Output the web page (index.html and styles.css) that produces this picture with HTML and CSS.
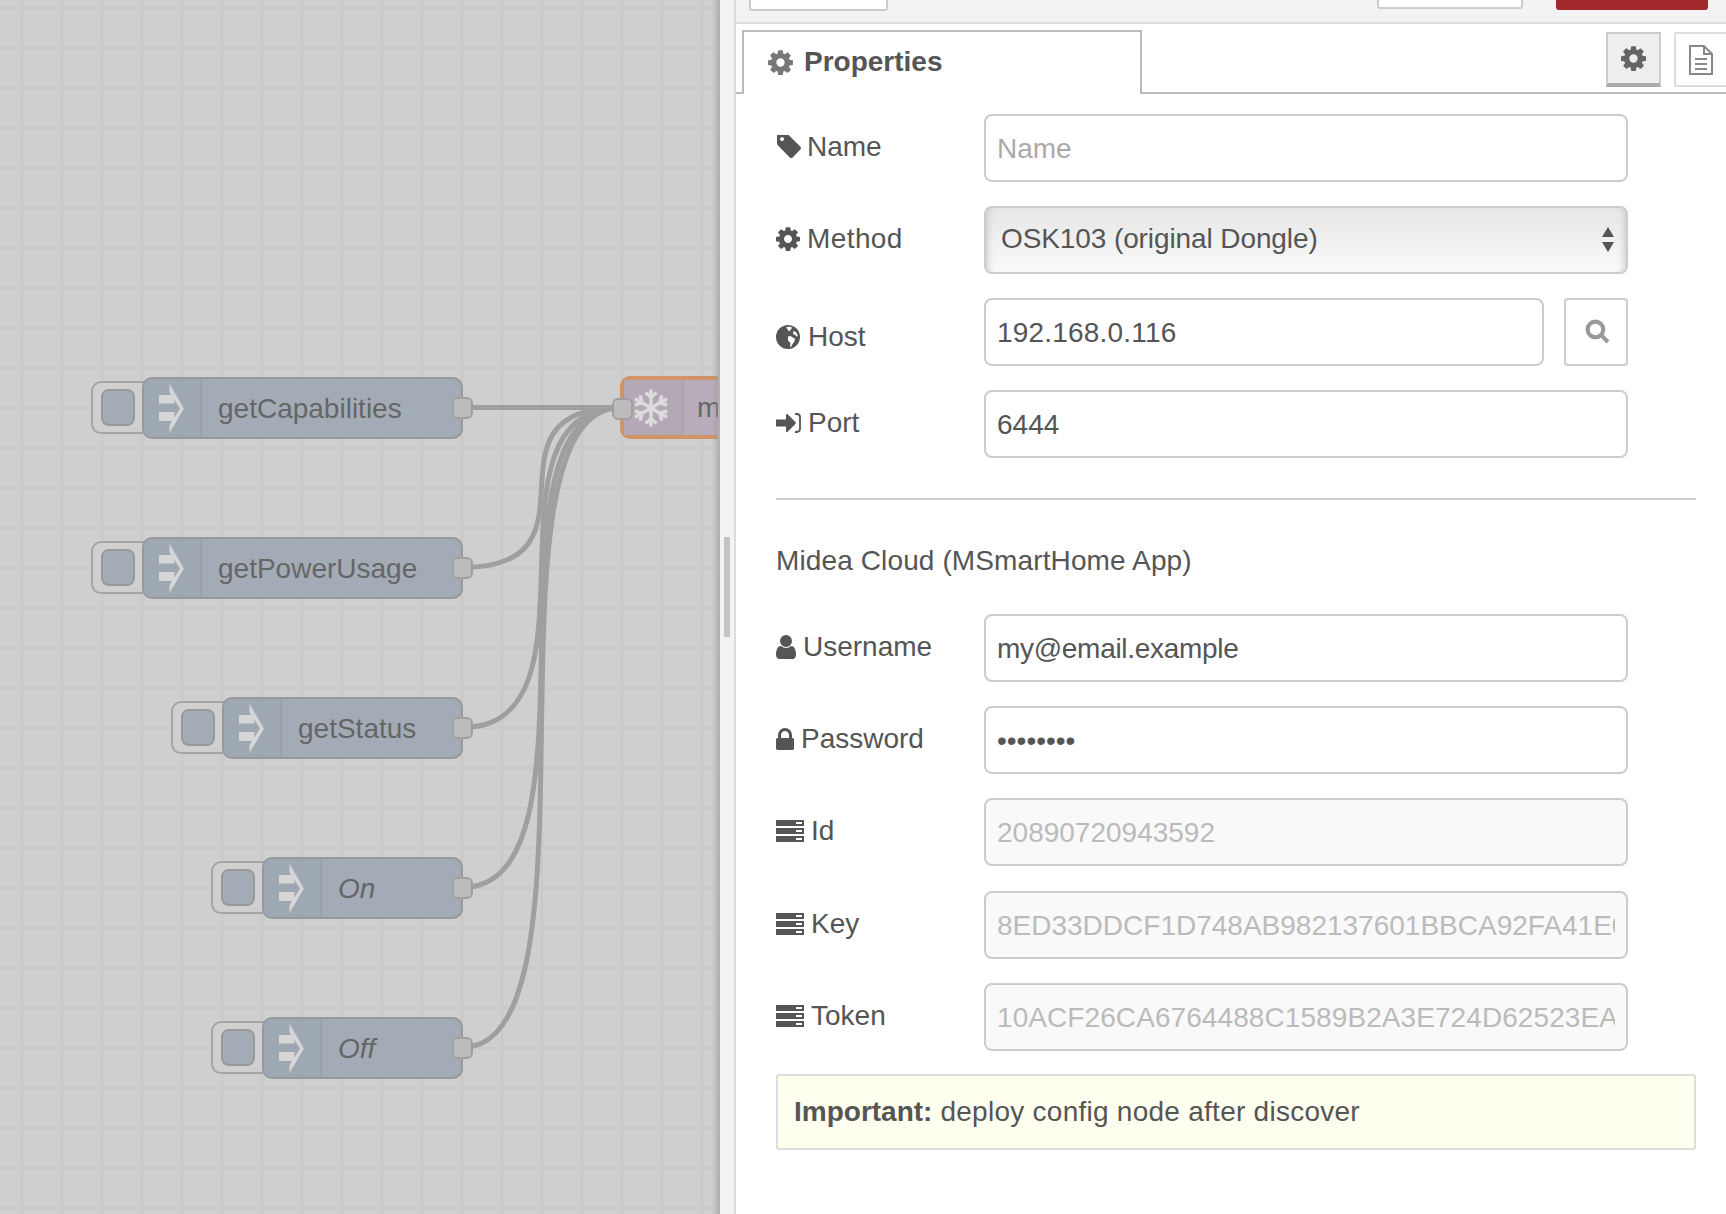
FILE: index.html
```html
<!DOCTYPE html>
<html lang="en">
<head>
	<meta charset="UTF-8">
	<title>Edit midea node</title>
	<link rel="stylesheet" href="styles.css">
</head>
<body>

	<svg class="icon-defs" xmlns="http://www.w3.org/2000/svg">
		<symbol id="i-cog" viewBox="128 128 1536 1536"><path d="M1152 896q0-106-75-181t-181-75-181 75-75 181 75 181 181 75 181-75 75-181zm512-109v222q0 12-8 23t-20 13l-185 28q-19 54-39 91 35 50 107 138 10 12 10 25t-9 23q-27 37-99 108t-94 71q-12 0-26-9l-138-108q-44 23-91 38-16 136-29 186-7 27-36 27h-222q-14 0-24.5-8.5t-11.5-21.5l-28-184q-49-16-90-37l-141 107q-10 9-25 9-14 0-25-11-126-114-165-157-7-10-7-23 0-12 8-23 15-21 51-66.5t54-70.5q-27-50-41-99l-183-27q-13-2-21-12.5t-8-23.5v-222q0-12 8-23t19-13l186-28q14-46 39-92-40-57-107-138-10-12-10-24 0-10 9-23 26-36 98.5-107.5t94.5-71.5q13 0 26 10l138 107q44-23 91-38 16-136 29-186 7-27 36-27h222q14 0 24.5 8.5t11.5 21.5l28 184q49 16 90 37l142-107q9-9 24-9 13 0 25 10 129 119 165 170 7 8 7 22 0 12-8 23-15 21-51 66.5t-54 70.5q26 50 41 98l183 28q13 2 21 12.5t8 23.5z"/></symbol>
		<symbol id="i-tag" viewBox="64 192 1580 1452"><path d="M576 448q0-53-37.5-90.5t-90.5-37.5-90.5 37.5-37.5 90.5 37.5 90.5 90.5 37.5 90.5-37.5 37.5-90.5zm1067 576q0 53-37 90l-491 492q-39 37-91 37-53 0-90-37l-715-716q-38-37-64.5-101t-26.5-117v-416q0-52 38-90t90-38h416q53 0 117 26.5t102 64.5l715 714q37 39 37 91z"/></symbol>
		<symbol id="i-user" viewBox="256 128 1280 1536"><path d="M1536 1399q0 109-62.5 187t-150.5 78h-854q-88 0-150.5-78t-62.5-187q0-85 8.5-160.5t31.5-152 58.5-131 94-89 134.5-34.5q131 128 313 128t313-128q76 0 134.5 34.5t94 89 58.5 131 31.5 152 8.5 160.5zm-256-887q0 159-112.5 271.5t-271.5 112.5-271.5-112.5-112.5-271.5 112.5-271.5 271.5-112.5 271.5 112.5 112.5 271.5z"/></symbol>
		<symbol id="i-lock" viewBox="320 128 1152 1408"><path d="M640 768h512v-192q0-106-75-181t-181-75-181 75-75 181v192zm832 96v576q0 40-28 68t-68 28h-960q-40 0-68-28t-28-68v-576q0-40 28-68t68-28h32v-192q0-184 132-316t316-132 316 132 132 316v192h32q40 0 68 28t28 68z"/></symbol>
		<symbol id="i-signin" viewBox="0 0 25 20"><path d="M0 6.500h10V2c0-.9 1-1.300 1.600-.7l7.800 7.800c.5.500.5 1.300 0 1.800l-7.800 7.800c-.6.600-1.600.2-1.600-.7v-4.500H0z"/><path d="M19 1h1.800c1.800 0 3.200 1.400 3.200 3.200v11.600c0 1.800-1.400 3.200-3.200 3.200H19" fill="none" stroke="currentColor" stroke-width="1.800"/></symbol>
		<symbol id="i-globe" viewBox="0 0 24 24"><circle cx="12" cy="12" r="12"/><path d="M10 2.500l3-1 3.500 1.200-1.500 1.300-1 2-2-.5-.5-1.500zM17.500 6l2.500 1 2 4-1.500.5-1-1.500-2-.5-.5-2zM12 11.500l2.500-.5 3 2 1.500.5-.5 3-2 2.500-1.500 3-1-.5.5-3.500-2.500-2.500z" fill="#fff"/></symbol>
		<symbol id="i-server" viewBox="0 0 28 22"><path d="M0 0h28v6H0zM0 8h28v6H0zM0 16h28v6H0z"/><path d="M20 2h6v2h-6zM20 10h6v2h-6zM20 18h6v2h-6z" fill="#fff"/></symbol>
		<symbol id="i-inject" viewBox="0 0 25 49"><path d="M0 11h15.500v8.500H0zM0 28h15.500v9H0z"/><path fill-rule="evenodd" d="M10.500 0L25 24.500 10.500 49V41L21 24.500 10.500 8z"/></symbol>
	</svg>

	<div class="workspace">
		<svg class="wires" xmlns="http://www.w3.org/2000/svg" width="720" height="1214">
			<path d="M462 407.500H621"/>
			<path d="M462 567.500C612 567.500 471 407.500 621 407.500"/>
			<path d="M462 727.500C612 727.500 471 407.500 621 407.500"/>
			<path d="M462 887.500C612 887.500 471 407.500 621 407.500"/>
			<path d="M462 1047.500C612 1047.500 471 407.500 621 407.500"/>
		</svg>

		<div class="node node-capabilities">
			<div class="inject-btn"><span></span></div>
			<div class="node-icon"><svg class="inject-icon"><use href="#i-inject"/></svg></div>
			<div class="node-label">getCapabilities</div>
			<div class="port port-out"></div>
		</div>
		<div class="node node-power">
			<div class="inject-btn"><span></span></div>
			<div class="node-icon"><svg class="inject-icon"><use href="#i-inject"/></svg></div>
			<div class="node-label">getPowerUsage</div>
			<div class="port port-out"></div>
		</div>
		<div class="node node-status">
			<div class="inject-btn"><span></span></div>
			<div class="node-icon"><svg class="inject-icon"><use href="#i-inject"/></svg></div>
			<div class="node-label">getStatus</div>
			<div class="port port-out"></div>
		</div>
		<div class="node node-on">
			<div class="inject-btn"><span></span></div>
			<div class="node-icon"><svg class="inject-icon"><use href="#i-inject"/></svg></div>
			<div class="node-label italic">On</div>
			<div class="port port-out"></div>
		</div>
		<div class="node node-off">
			<div class="inject-btn"><span></span></div>
			<div class="node-icon"><svg class="inject-icon"><use href="#i-inject"/></svg></div>
			<div class="node-label italic">Off</div>
			<div class="port port-out"></div>
		</div>

		<div class="midea-node">
			<div class="midea-icon">
				<svg class="snowflake" viewBox="-18 -20 36 40" xmlns="http://www.w3.org/2000/svg">
					<g id="arm"><path d="M0 0V-18.500M-5.500 -15.500L0 -10.500L5.500 -15.500"/></g>
					<use href="#arm" transform="rotate(60)"/>
					<use href="#arm" transform="rotate(120)"/>
					<use href="#arm" transform="rotate(180)"/>
					<use href="#arm" transform="rotate(240)"/>
					<use href="#arm" transform="rotate(300)"/>
				</svg>
			</div>
			<div class="midea-label">m</div>
			<div class="port port-in"></div>
		</div>
	</div>

	<div class="tray-grip"><div class="grip-handle"></div></div>

	<div class="tray">
		<div class="tray-toolbar">
			<div class="toolbar-btn btn-left"></div>
			<div class="toolbar-btn btn-cancel"></div>
			<div class="toolbar-btn btn-delete"></div>
		</div>

		<div class="tabs">
			<div class="tab"><svg class="tab-cog"><use href="#i-cog"/></svg>Properties</div>
			<div class="tab-btn tab-btn-active"><svg class="btn-cog"><use href="#i-cog"/></svg></div>
			<div class="tab-btn tab-btn-doc">
				<svg class="doc-icon" viewBox="0 0 24 30" xmlns="http://www.w3.org/2000/svg">
					<path d="M1 1H15L23 9V29H1Z M15 1V9H23 M6 14H18 M6 19H18 M6 24H18"/>
				</svg>
			</div>
		</div>

		<form class="form">
			<div class="row">
				<label class="field-label label-name"><svg class="ico ico-tag"><use href="#i-tag"/></svg>Name</label>
				<input class="field" type="text" placeholder="Name">
			</div>
			<div class="row">
				<label class="field-label label-method"><svg class="ico ico-cog"><use href="#i-cog"/></svg>Method</label>
				<div class="select-wrap">
					<select class="select">
						<option>OSK103 (original Dongle)</option>
					</select>
					<span class="select-arrows"></span>
				</div>
			</div>
			<div class="row">
				<label class="field-label label-host"><svg class="ico ico-globe"><use href="#i-globe"/></svg>Host</label>
				<input class="field field-host" type="text" value="192.168.0.116">
				<button class="search-btn" type="button">
					<svg class="search-icon" viewBox="0 0 24 24" xmlns="http://www.w3.org/2000/svg">
						<circle cx="10" cy="10" r="7.500"/><path d="M15.500 15.500L22 22"/>
					</svg>
				</button>
			</div>
			<div class="row">
				<label class="field-label"><svg class="ico ico-signin"><use href="#i-signin"/></svg>Port</label>
				<input class="field" type="text" value="6444">
			</div>

			<hr class="divider">
			<div class="section-title">Midea Cloud (MSmartHome App)</div>

			<div class="row">
				<label class="field-label"><svg class="ico ico-user"><use href="#i-user"/></svg>Username</label>
				<input class="field field-email" type="text" value="my@email.example">
			</div>
			<div class="row">
				<label class="field-label"><svg class="ico ico-lock"><use href="#i-lock"/></svg>Password</label>
				<input class="field" type="password" value="password">
			</div>
			<div class="row">
				<label class="field-label"><svg class="ico ico-server"><use href="#i-server"/></svg>Id</label>
				<input class="field" type="text" value="20890720943592" disabled>
			</div>
			<div class="row">
				<label class="field-label"><svg class="ico ico-server"><use href="#i-server"/></svg>Key</label>
				<input class="field" type="text" value="8ED33DDCF1D748AB982137601BBCA92FA41E0C7A" disabled>
			</div>
			<div class="row">
				<label class="field-label"><svg class="ico ico-server"><use href="#i-server"/></svg>Token</label>
				<input class="field field-token" type="text" value="10ACF26CA6764488C1589B2A3E724D62523EAA7B" disabled>
			</div>

			<div class="tip"><b>Important:</b><span class="tip-text">deploy config node after discover</span></div>
		</form>
	</div>

</body>
</html>
```

FILE: styles.css
```css
* {
	box-sizing: border-box;
}
html, body {
	margin: 0;
	height: 100%;
}
body {
	display: flex;
	width: 1726px;
	height: 1214px;
	overflow: hidden;
	font-family: "Liberation Sans", Arial, sans-serif;
	font-size: 28px;
	color: #555;
	background: #fff;
}
.icon-defs {
	display: none;
}

/* flow canvas */
.workspace {
	position: relative;
	isolation: isolate;
	width: 720px;
	flex: none;
	overflow: hidden;
	background-color: #cfcfcf;
	background-image:
		linear-gradient(to right, #c8c8c8 2px, transparent 2px),
		linear-gradient(to bottom, #c8c8c8 2px, transparent 2px);
	background-size: 40px 40px;
	background-position: 21px 7px;
}
.workspace::after {
	content: "";
	position: absolute;
	top: 0;
	right: 0;
	bottom: 0;
	width: 8px;
	background: linear-gradient(to right, rgba(150,150,150,0), rgba(150,150,150,.6));
}
.wires {
	position: absolute;
	left: 0;
	top: 0;
}
.wires path {
	fill: none;
	stroke: #9f9f9f;
	stroke-width: 5;
}
.node {
	position: absolute;
	right: 257px;
	height: 62px;
	display: flex;
	align-items: center;
	background: #a3acb6;
	border: 2px solid #999;
	border-radius: 10px;
}
.node-capabilities { top: 377px; left: 142px; }
.node-power { top: 537px; left: 142px; }
.node-status { top: 697px; left: 222px; }
.node-on { top: 857px; left: 262px; }
.node-off { top: 1017px; left: 262px; }

.node-icon {
	width: 58px;
	height: 100%;
	flex: none;
	display: flex;
	align-items: center;
	padding-left: 15px;
	background: #9ea8b2;
	border-right: 2px solid #98a2ac;
	border-radius: 8px 0 0 8px;
}
.inject-icon {
	width: 25px;
	height: 49px;
	fill: #d6d6d6;
}
.node-label {
	margin-left: 16px;
	padding-top: 2px;
	color: #666;
	white-space: nowrap;
}
.italic {
	font-style: italic;
}
.inject-btn {
	position: absolute;
	left: -53px;
	top: 2px;
	width: 61px;
	height: 53px;
	z-index: -1;
	padding: 6px 0 0 8px;
	border: 2px solid #a5a5a5;
	border-radius: 10px;
	background: #cfcfcf;
}
.inject-btn span {
	display: block;
	width: 34px;
	height: 37px;
	background: #a3acb6;
	border: 2px solid #999;
	border-radius: 8px;
}
.port {
	position: absolute;
	width: 21px;
	height: 22px;
	background: #bcbcbc;
	border: 2px solid #a0a0a0;
	border-radius: 6px;
}
.port-out {
	right: -12px;
	top: 18px;
}
.port-in {
	left: -12px;
	top: 18px;
}
.midea-node {
	position: absolute;
	left: 620px;
	top: 376px;
	width: 98px;
	height: 63px;
	display: flex;
	align-items: center;
	background: #b9acba;
	border: 4px solid #cf9566;
	border-right: 0;
	border-radius: 10px 0 0 10px;
}
.midea-icon {
	width: 60px;
	height: 100%;
	flex: none;
	display: flex;
	align-items: center;
	justify-content: center;
	padding-right: 4px;
	background: #b5a8b6;
	border-right: 2px solid #aea1af;
}
.snowflake {
	width: 36px;
	height: 40px;
	fill: none;
	stroke: #dcdcdc;
	stroke-width: 3.500;
}
.midea-label {
	width: 21px;
	margin-left: 13px;
	overflow: hidden;
	color: #666;
	white-space: nowrap;
}

/* strip between canvas and tray */
.tray-grip {
	position: relative;
	width: 16px;
	flex: none;
	background: #f3f3f3;
	border-right: 2px solid #ddd;
}
.grip-handle {
	position: absolute;
	left: 4px;
	top: 537px;
	width: 6px;
	height: 100px;
	background: #c4c4c4;
}

/* edit tray */
.tray {
	flex: 1;
	min-width: 0;
	display: flex;
	flex-direction: column;
}
.tray-toolbar {
	height: 24px;
	flex: none;
	display: flex;
	align-items: flex-start;
	padding: 0 18px 0 13px;
	background: #f3f3f3;
	border-bottom: 2px solid #ddd;
}
.toolbar-btn {
	background: #fff;
	border: 2px solid #ccc;
	border-top: 0;
	border-radius: 0 0 3px 3px;
}
.btn-left {
	width: 139px;
	height: 11px;
}
.btn-cancel {
	width: 146px;
	height: 9px;
	margin-left: auto;
}
.btn-delete {
	width: 152px;
	height: 10px;
	margin-left: 33px;
	background: #a2282c;
	border: 0;
}

.tabs {
	height: 70px;
	flex: none;
	display: flex;
	align-items: flex-start;
	padding-top: 6px;
	border-bottom: 2px solid #bbb;
}
.tab {
	width: 400px;
	height: 64px;
	margin-left: 6px;
	display: flex;
	align-items: center;
	gap: 11px;
	padding: 0 0 2px 24px;
	font-weight: bold;
	background: #fff;
	border: 2px solid #bbb;
	border-bottom: 0;
}
.tab-cog {
	width: 25px;
	height: 25px;
	fill: #777;
}
.tab-btn {
	height: 55px;
	margin-top: 2px;
	display: flex;
	align-items: center;
	justify-content: center;
	border: 2px solid #ddd;
}
.tab-btn-active {
	width: 55px;
	margin-left: auto;
	background: #eee;
	border-color: #ccc;
	border-bottom: 4px solid #aaa;
}
.btn-cog {
	width: 25px;
	height: 25px;
	fill: #666;
}
.tab-btn-doc {
	width: 60px;
	margin-left: 13px;
	margin-right: -8px;
	justify-content: flex-start;
	padding-left: 13px;
}
.doc-icon {
	width: 24px;
	height: 30px;
	fill: none;
	stroke: #888;
	stroke-width: 2;
}

.form {
	padding: 19.5px 30px 0 40px;
}
.row {
	display: flex;
	align-items: center;
	height: 68px;
	margin-bottom: 24.2px;
}
.field-label {
	width: 208px;
	flex: none;
	display: flex;
	align-items: center;
	gap: 7px;
	line-height: 32px;
	margin-top: -2px;
}
.label-name {
	gap: 6px;
}
.label-method {
	letter-spacing: .4px;
}
.label-host {
	gap: 8px;
	margin-top: 10px;
}
.ico {
	flex: none;
	fill: #555;
}
.ico-tag { width: 25px; height: 23px; }
.ico-cog { width: 24px; height: 24px; }
.ico-globe { width: 24px; height: 24px; }
.ico-signin { width: 25px; height: 20px; }
.ico-user { width: 20px; height: 24px; }
.ico-lock { width: 18px; height: 22px; }
.ico-server { width: 28px; height: 22px; }

.field {
	width: 644px;
	height: 68px;
	padding: 2px 11px 0;
	font: inherit;
	color: #555;
	background: #fff;
	border: 2px solid #ccc;
	border-radius: 8px;
	outline: none;
}
.field::placeholder {
	color: #aaa;
	opacity: 1;
}
.field:disabled {
	color: #bbb;
	-webkit-text-fill-color: #bbb;
	opacity: 1;
	background: #f9f9f9;
}
.field-host {
	width: 560px;
	letter-spacing: .2px;
}
.field-email {
	letter-spacing: -.3px;
}
.field-token {
	letter-spacing: .08px;
}
.search-btn {
	width: 64px;
	height: 68px;
	margin-left: 20px;
	padding: 0 0 0 3px;
	display: flex;
	align-items: center;
	justify-content: center;
	background: #fff;
	border: 2px solid #ccc;
	border-radius: 4px;
}
.search-icon {
	width: 25px;
	height: 25px;
	fill: none;
	stroke: #999;
	stroke-width: 4;
}
.select-wrap {
	position: relative;
	width: 644px;
	height: 68px;
}
.select {
	width: 100%;
	height: 100%;
	padding: 0 40px 2px 15px;
	font: inherit;
	letter-spacing: -.1px;
	color: #555;
	appearance: none;
	background: linear-gradient(to bottom, #e6e6e6, #fafafa);
	border: 2px solid #ccc;
	border-radius: 8px;
	box-shadow: inset 8px 0 6px -6px #ccc, inset -8px 0 6px -6px #ccc;
}
.select-arrows {
	position: absolute;
	right: 14px;
	top: 21px;
	width: 12px;
	height: 25px;
	pointer-events: none;
}
.select-arrows::before,
.select-arrows::after {
	content: "";
	position: absolute;
	left: 0;
	border-left: 6px solid transparent;
	border-right: 6px solid transparent;
}
.select-arrows::before {
	top: 0;
	border-bottom: 10px solid #555;
}
.select-arrows::after {
	bottom: 0;
	border-top: 10px solid #555;
}

.divider {
	width: 920px;
	height: 2px;
	margin: 40px 0 44.5px;
	background: #ccc;
	border: 0;
}
.section-title {
	line-height: 32px;
	margin-bottom: 37.5px;
	letter-spacing: .12px;
}
.tip {
	width: 920px;
	height: 76px;
	margin-top: -1.2px;
	display: flex;
	align-items: center;
	gap: 8px;
	padding-left: 16px;
	background: #ffffef;
	border: 2px solid #ddd;
	border-radius: 3px;
}
.tip-text {
	letter-spacing: .26px;
}
```
